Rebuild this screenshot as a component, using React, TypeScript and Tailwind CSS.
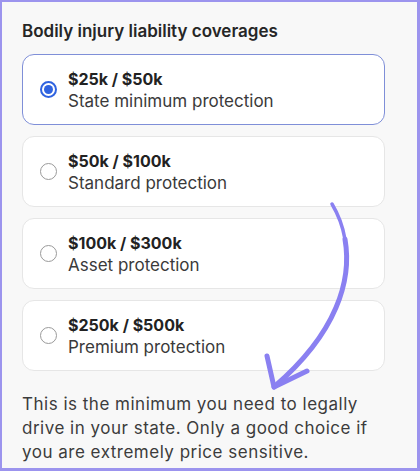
const options = [
  { amount: "$25k / $50k", label: "State minimum protection", selected: true },
  { amount: "$50k / $100k", label: "Standard protection", selected: false },
  { amount: "$100k / $300k", label: "Asset protection", selected: false },
  { amount: "$250k / $500k", label: "Premium protection", selected: false },
]

function Radio({ checked }: { checked: boolean }) {
  if (checked) {
    return (
      <span className="flex h-[17px] w-[17px] shrink-0 items-center justify-center rounded-full border-2 border-[#2f63e0] bg-white">
        <span className="h-[9px] w-[9px] rounded-full bg-[#2f63e0]" />
      </span>
    )
  }
  return <span className="h-[17px] w-[17px] shrink-0 rounded-full border border-[#9a9a9a] bg-white" />
}

export default function App() {
  return (
    <div
      className="relative h-[471px] w-[420px] overflow-hidden border-t-2 border-l-2 border-r-[3px] border-b-[3px] border-[#9c94ee] bg-[#f8f8f8] text-[#2b2b2b]"
      style={{ fontFamily: "Inter, 'Noto Sans', sans-serif" }}
    >
      <div className="pl-[20px] pr-[32px] pt-[17px]">
        <h2 className="mb-[11px] text-[17px] font-semibold leading-[24px] text-[#262626]">
          Bodily injury liability coverages
        </h2>

        <div className="flex flex-col gap-[11px]">
          {options.map((opt) => (
            <div
              key={opt.amount}
              className={
                "flex h-[71px] items-center gap-[11px] rounded-[12px] border bg-white pl-[17px] " +
                (opt.selected ? "border-[#7f8fd8]" : "border-[#e6e6e6]")
              }
            >
              <Radio checked={opt.selected} />
              <div className="flex flex-col">
                <span className="text-[16px] font-bold leading-[22px] text-[#222]">{opt.amount}</span>
                <span className="text-[17px] leading-[22px] text-[#3a3a3a]">{opt.label}</span>
              </div>
            </div>
          ))}
        </div>

        <p className="mt-[21px] text-[17px] leading-[24px] tracking-[0.5px] text-[#3c3c3c]">
          This is the minimum you need to legally drive in your state. Only a good choice if you are extremely price
          sensitive.
        </p>
      </div>

      {/* hand-drawn arrow overlay */}
      <svg className="pointer-events-none absolute left-0 top-0" width="420" height="471" viewBox="-2 -2 420 471">
        <path d="M328 200 C334 210 338.7 221.9 341 235.2" fill="none" stroke="#8a80f1" strokeWidth="3.5" strokeLinecap="round" />
        <path d="M341 235.2 C348 275.2 333.75 328.25 270 383" fill="none" stroke="#8a80f1" strokeWidth="5" strokeLinecap="round" />
        <path
          d="M263 352 L270 383 L303 367"
          fill="none"
          stroke="#8a80f1"
          strokeWidth="5"
          strokeLinecap="round"
          strokeLinejoin="round"
        />
      </svg>
    </div>
  )
}
